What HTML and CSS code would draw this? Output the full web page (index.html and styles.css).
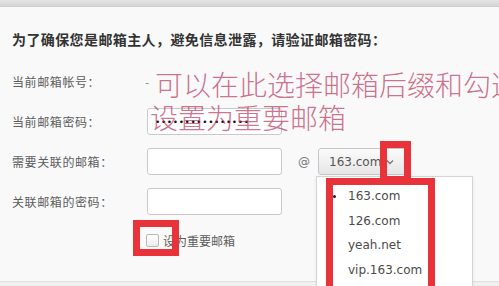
FILE: index.html
```html
<!DOCTYPE html>
<html lang="zh-CN">
<head>
<meta charset="utf-8">
<title>关联邮箱</title>
<link rel="stylesheet" href="styles.css">
</head>
<body>
<div class="topbar"></div>
<div class="panel">
  <h2 class="title">为了确保您是邮箱主人，避免信息泄露，请验证邮箱密码：</h2>
  <div class="form">
    <div class="row">
      <span class="label">当前邮箱帐号：</span>
      <span class="value">-</span>
    </div>
    <div class="row">
      <span class="label">当前邮箱密码：</span>
      <div class="field pw">••••••••••••••••</div>
    </div>
    <div class="row">
      <span class="label">需要关联的邮箱：</span>
      <div class="field"></div>
      <span class="at">@</span>
      <div class="select">
        <span class="select-text">163.com</span>
        <svg class="chev" width="8" height="6" viewBox="0 0 8 6"><path d="M1 1.5 L4 4.5 L7 1.5" fill="none" stroke="#777" stroke-width="1.3"/></svg>
      </div>
    </div>
    <div class="row">
      <span class="label">关联邮箱的密码：</span>
      <div class="field"></div>
    </div>
    <div class="row check-row">
      <span class="checkbox"></span>
      <span class="check-label">设为重要邮箱</span>
    </div>
  </div>
</div>
<div class="bottombar"></div>

<ul class="dropdown">
  <li class="selected">163.com</li>
  <li>126.com</li>
  <li>yeah.net</li>
  <li>vip.163.com</li>
</ul>

<div class="note">
  <div class="note-line first">可以在此选择邮箱后缀和勾选</div>
  <div class="note-line">设置为重要邮箱</div>
</div>

<div class="mark mark-check"></div>
<div class="mark mark-arrow"></div>
<div class="mark mark-list"></div>
</body>
</html>
```
FILE: styles.css
```css
html, body {
  margin: 0;
  padding: 0;
}
html {
  overflow: hidden;
}
body {
  width: 499px;
  height: 286px;
  overflow: hidden;
  background: #f9f9f9;
  font-family: "Noto Sans CJK SC", sans-serif;
  position: relative;
}
.topbar {
  height: 6px;
  background: linear-gradient(#e4e4e4, #d6d6d6);
  border-bottom: 1px solid #cfcfcf;
}
.panel {
  height: 274px;
  box-sizing: border-box;
  padding: 22px 0 0 12px;
}
.title {
  margin: 0;
  font-size: 14px;
  line-height: 20px;
  font-weight: bold;
  letter-spacing: 0.4px;
  color: #333;
}
.form {
  margin-top: 19px;
  display: flex;
  flex-direction: column;
  gap: 13px;
}
.row {
  display: flex;
  align-items: center;
  height: 27px;
}
.label {
  width: 135px;
  flex: none;
  font-size: 12px;
  letter-spacing: 0.6px;
  color: #5c5c5c;
}
.value {
  color: #888;
  font-size: 12px;
  margin-left: -2px;
}
.field {
  width: 135px;
  height: 27px;
  box-sizing: border-box;
  border: 1px solid #c9c9c9;
  border-radius: 3px;
  background: #fff;
}
.pw {
  display: flex;
  align-items: center;
  padding-left: 7px;
  font-family: "DejaVu Sans", sans-serif;
  font-size: 9px;
  letter-spacing: 0.6px;
  color: #111;
}
.at {
  margin-left: 16px;
  font-family: "DejaVu Sans", sans-serif;
  font-size: 12px;
  color: #777;
}
.select {
  margin-left: 8px;
  width: 88px;
  height: 27px;
  box-sizing: border-box;
  border: 1px solid #c6c6c6;
  border-radius: 3px;
  background: linear-gradient(#fbfbfb, #e6e6e6);
  display: flex;
  align-items: center;
  padding-left: 10px;
  gap: 5px;
}
.select-text {
  font-family: "DejaVu Sans", sans-serif;
  font-size: 12px;
  color: #555;
}
.check-row {
  height: 20px;
  margin-top: 2px;
  padding-left: 134px;
  gap: 4px;
}
.checkbox {
  width: 13px;
  height: 13px;
  box-sizing: border-box;
  border: 1px solid #b9b9b9;
  border-radius: 2px;
  background: linear-gradient(#ffffff, #ececec);
}
.check-label {
  font-size: 12px;
  color: #5c5c5c;
}
.bottombar {
  height: 5px;
  box-sizing: border-box;
  border-top: 1px solid #e0e0e0;
  background: #f1f1f1;
}
.dropdown {
  position: absolute;
  left: 316px;
  top: 176px;
  width: 157px;
  height: 110px;
  box-sizing: border-box;
  margin: 0;
  padding: 7px 0 0 31px;
  list-style: none;
  background: #fff;
  border: 1px solid #d4d4d4;
  border-bottom: none;
  box-shadow: 0 1px 3px rgba(0,0,0,0.08);
}
.dropdown li {
  position: relative;
  height: 24.5px;
  line-height: 24px;
  font-family: "DejaVu Sans", sans-serif;
  font-size: 12px;
  color: #4a4a4a;
}
.dropdown li.selected::before {
  content: "";
  position: absolute;
  left: -15px;
  top: 11px;
  width: 3px;
  height: 3px;
  border-radius: 50%;
  background: #222;
}
.note {
  position: absolute;
  left: 150px;
  top: 68px;
  width: 349px;
  overflow: hidden;
  font-family: "Noto Sans CJK SC", sans-serif;
  font-size: 28px;
  line-height: 33px;
  font-weight: 300;
  color: rgba(180, 45, 85, 0.68);
  white-space: nowrap;
}
.note-line.first {
  margin-left: 5px;
}
.mark {
  position: absolute;
  box-sizing: border-box;
  border: 7px solid #e8333a;
}
.mark-check {
  left: 133px;
  top: 220px;
  width: 46px;
  height: 36px;
}
.mark-arrow {
  left: 380px;
  top: 141px;
  width: 31px;
  height: 42px;
}
.mark-list {
  left: 326px;
  top: 178px;
  width: 109px;
  height: 108px;
  border-bottom: none;
}
```
